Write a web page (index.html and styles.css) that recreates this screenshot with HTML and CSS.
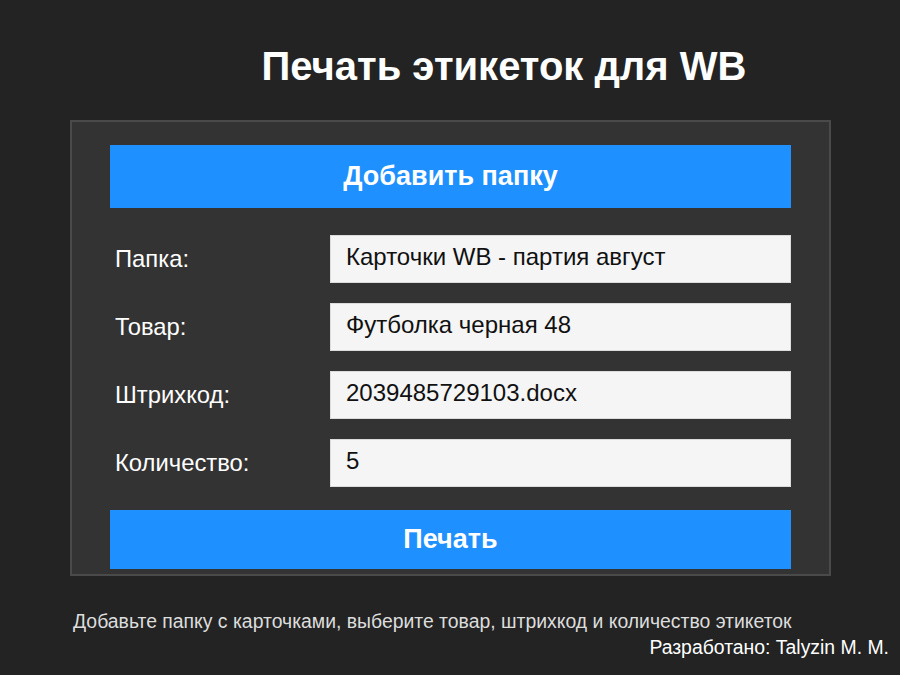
FILE: index.html
```html
<!DOCTYPE html>
<html lang="ru">
<head>
<meta charset="utf-8">
<title>Печать этикеток для WB</title>
<link rel="stylesheet" href="styles.css">
</head>
<body>
<h1 class="title">Печать этикеток для WB</h1>
<div class="panel">
  <button class="btn btn-add">Добавить папку</button>
  <div class="form">
    <label class="label">Папка:</label>
    <div class="field">Карточки WB - партия август</div>
    <label class="label">Товар:</label>
    <div class="field">Футболка черная 48</div>
    <label class="label">Штрихкод:</label>
    <div class="field">2039485729103.docx</div>
    <label class="label">Количество:</label>
    <div class="field">5</div>
  </div>
  <button class="btn btn-print">Печать</button>
</div>
<p class="hint">Добавьте папку с карточками, выберите товар, штрихкод и количество этикеток</p>
<p class="credit">Разработано: Talyzin M. M.</p>
</body>
</html>
```

FILE: styles.css
```css
html, body {
  margin: 0;
  padding: 0;
}
body {
  background: #232323;
  font-family: "Liberation Sans", Arial, sans-serif;
  color: #ffffff;
  width: 900px;
  height: 675px;
  overflow: hidden;
}
.title {
  margin: 0;
  padding: 44px 0 0 108px;
  height: 120px;
  box-sizing: border-box;
  text-align: center;
  font-size: 40px;
  font-weight: bold;
  line-height: 44px;
  color: #ffffff;
}
.panel {
  margin-left: 70px;
  width: 761px;
  height: 456px;
  box-sizing: border-box;
  background: #333333;
  border: 2px solid #4a4a4a;
  padding: 23px 38px 0 38px;
  display: flex;
  flex-direction: column;
}
.btn {
  display: block;
  width: 100%;
  border: none;
  background: #1e90ff;
  color: #ffffff;
  font-family: "Liberation Sans", Arial, sans-serif;
  font-weight: bold;
  font-size: 27px;
  padding: 0;
}
.btn-add {
  height: 63px;
}
.btn-print {
  height: 59px;
  margin-top: 23px;
}
.form {
  display: grid;
  grid-template-columns: 220px 1fr;
  row-gap: 20px;
  margin-top: 27px;
}
.label {
  padding-left: 5px;
  font-size: 23.8px;
  line-height: 48px;
  color: #ffffff;
}
.field {
  height: 48px;
  box-sizing: border-box;
  background: #f5f5f5;
  border: 1px solid #dcdcdc;
  padding-left: 15px;
  font-size: 24px;
  line-height: 42px;
  color: #111111;
}
.hint {
  margin: 34px 0 0 73px;
  font-size: 19.4px;
  line-height: 22px;
  color: #dddddd;
}
.credit {
  margin: 4px 11px 0 0;
  text-align: right;
  font-size: 19.4px;
  line-height: 22px;
  color: #ffffff;
}
```
